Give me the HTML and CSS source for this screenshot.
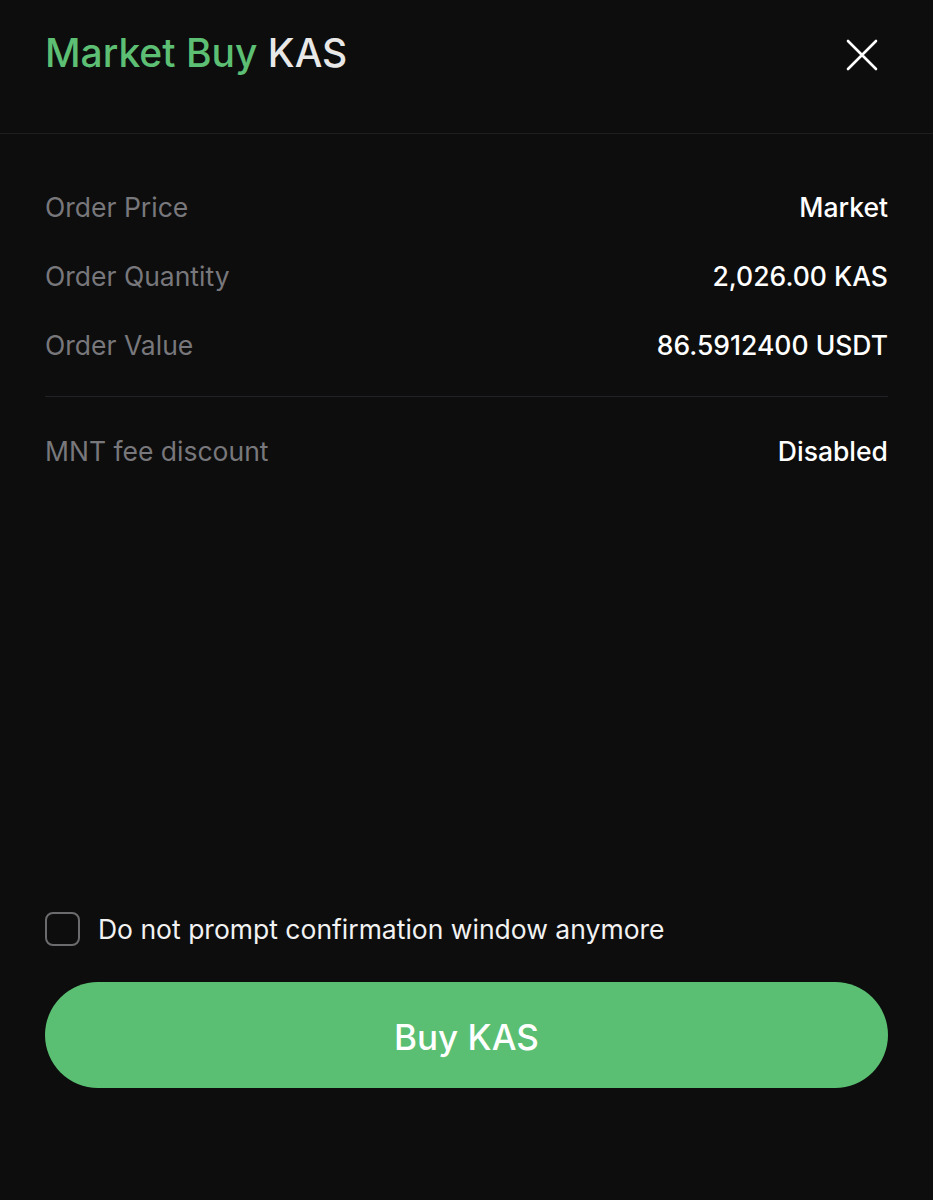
FILE: index.html
```html
<!DOCTYPE html>
<html lang="en">
<head>
    <meta charset="UTF-8">
    <meta name="viewport" content="width=device-width, initial-scale=1.0">
    <title>Market Buy KAS</title>
    <link rel="stylesheet" href="styles.css">
</head>
<body>
    <div class="sheet">
        <header class="sheet-header">
            <h1 class="title"><span class="side-buy">Market Buy</span> KAS</h1>
            <button class="close-btn" aria-label="Close">
                <svg width="32" height="32" viewBox="0 0 32 32">
                    <path d="M2 2 L30 30 M30 2 L2 30" stroke="#fff" stroke-width="2.6" stroke-linecap="round" fill="none"/>
                </svg>
            </button>
        </header>

        <div class="details">
            <div class="row">
                <span class="label">Order Price</span>
                <span class="value">Market</span>
            </div>
            <div class="row">
                <span class="label">Order Quantity</span>
                <span class="value">2,026.00 KAS</span>
            </div>
            <div class="row">
                <span class="label">Order Value</span>
                <span class="value">86.5912400 USDT</span>
            </div>
            <hr class="divider">
            <div class="row">
                <span class="label">MNT fee discount</span>
                <span class="value">Disabled</span>
            </div>
        </div>

        <div class="sheet-footer">
            <label class="check-row">
                <span class="checkbox"></span>
                <span class="check-text">Do not prompt confirmation window anymore</span>
            </label>
            <button class="buy-btn">Buy KAS</button>
        </div>
    </div>
</body>
</html>
```

FILE: styles.css
```css
* {
    margin: 0;
    padding: 0;
    box-sizing: border-box;
}
body {
    font-family: 'Inter', 'Liberation Sans', sans-serif;
    background-color: #0d0d0d;
    color: #fff;
}
.sheet {
    min-height: 100vh;
    display: flex;
    flex-direction: column;
}
.sheet-header {
    height: 134px;
    padding: 30px 55px 0 45px;
    display: flex;
    justify-content: space-between;
    align-items: flex-start;
    border-bottom: 1px solid #1e1e20;
}
.title {
    font-size: 39px;
    font-weight: 500;
    line-height: 46px;
    color: #e8e8e8;
}
.side-buy {
    color: #5cbf74;
}
.close-btn {
    background: none;
    border: none;
    width: 32px;
    height: 32px;
    margin-top: 9px;
    cursor: pointer;
}
.close-btn svg {
    display: block;
}
.details {
    flex: 1;
    padding: 38px 45px 0;
}
.row {
    height: 69px;
    display: flex;
    justify-content: space-between;
    align-items: center;
    font-size: 26.5px;
}
.label {
    color: #78787c;
}
.value {
    color: #fff;
    font-weight: 500;
}
.divider {
    border: none;
    border-top: 1px solid #222328;
    margin: 17px 0 19px;
}
.sheet-footer {
    padding: 0 45px 112px;
}
.check-row {
    display: flex;
    align-items: center;
    gap: 18px;
    height: 40px;
    cursor: pointer;
}
.checkbox {
    width: 35px;
    height: 34px;
    border: 2px solid #6b6b6e;
    border-radius: 8px;
}
.check-text {
    font-size: 26.5px;
    color: #f2f2f2;
}
.buy-btn {
    display: block;
    width: 100%;
    height: 106px;
    margin-top: 33px;
    border: none;
    border-radius: 53px;
    background-color: #5abf72;
    color: #fff;
    font-family: 'Inter', 'Liberation Sans', sans-serif;
    font-size: 35px;
    font-weight: 500;
    padding-top: 4px;
    cursor: pointer;
}
```
